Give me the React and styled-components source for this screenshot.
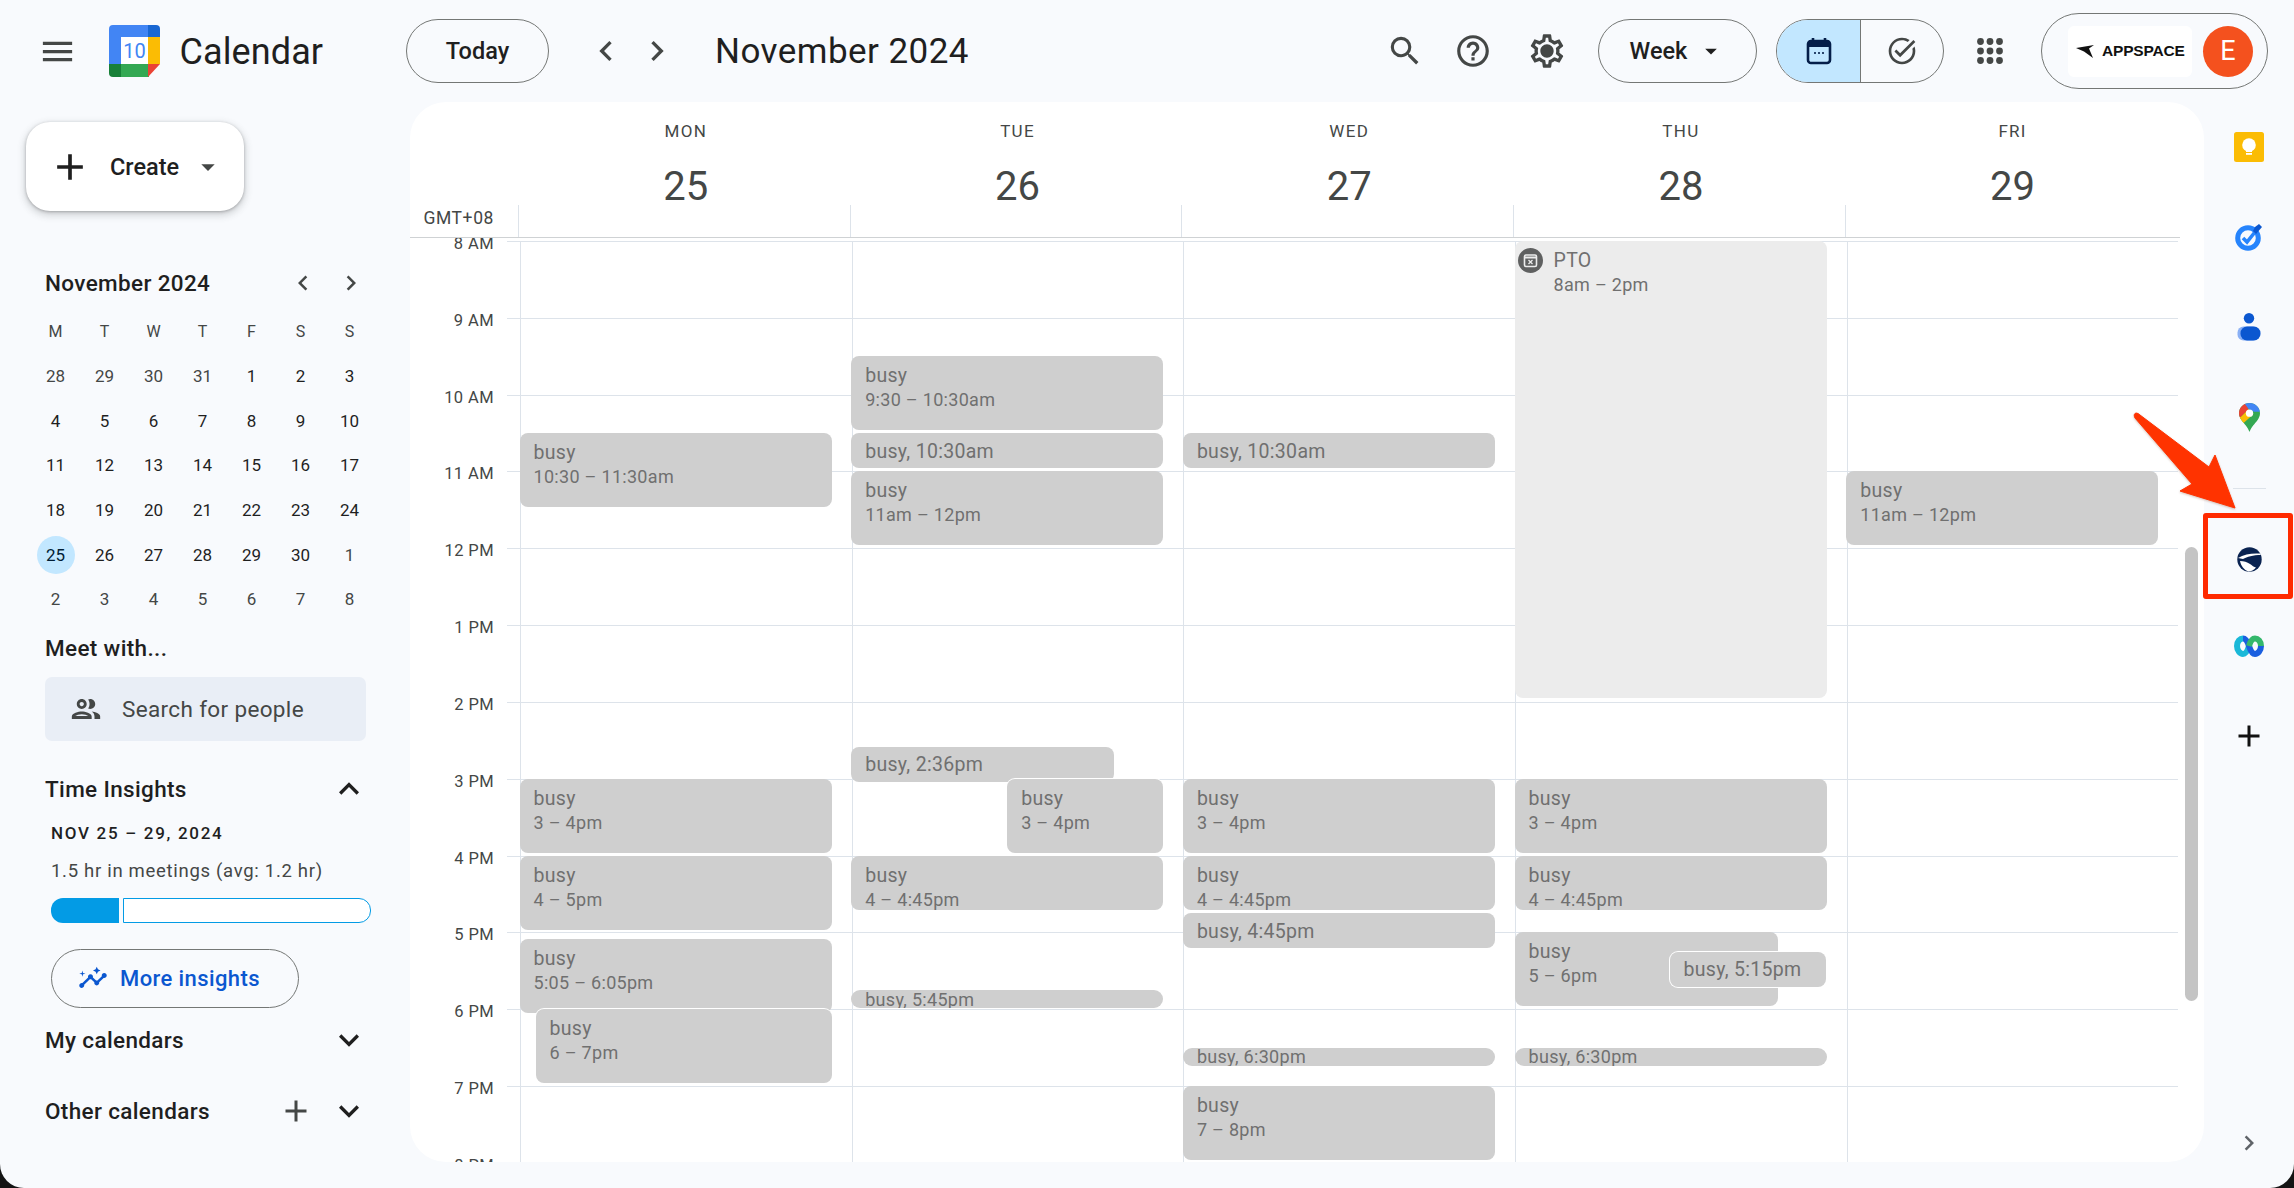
import React from "react";
import styled, { createGlobalStyle } from "styled-components";
import {
  MdMenu,
  MdSearch,
  MdOutlineHelpOutline,
  MdOutlineSettings,
  MdArrowDropDown,
  MdChevronLeft,
  MdChevronRight,
  MdAdd,
  MdKeyboardArrowUp,
  MdKeyboardArrowDown,
  MdOutlineGroup,
  MdOutlineTaskAlt,
  MdInsights,
} from "react-icons/md";

const FONT = `Roboto, "Liberation Sans", sans-serif`;
const HOUR = 76.83;

const GlobalStyle = createGlobalStyle`
  html, body {
    margin: 0;
    padding: 0;
    background: #141414;
    overflow: hidden;
  }
  * {
    box-sizing: border-box;
  }
`;

const Page = styled.div`
  position: relative;
  width: 2294px;
  height: 1188px;
  display: flex;
  flex-direction: column;
  overflow: hidden;
  background: #f8fafd;
  border-radius: 0 0 24px 24px;
  font-family: ${FONT};
  color: #1f1f1f;
`;

// Top bar
const TopBar = styled.header`
  flex: 0 0 102px;
  display: flex;
  align-items: center;
  padding-left: 37px;
`;

const IconSlot = styled.div`
  flex: none;
  display: flex;
  align-items: center;
  justify-content: center;
  width: ${(p) => p.$w || 40}px;
  height: 40px;
  margin-left: ${(p) => p.$ml || 0}px;
  color: ${(p) => p.$color || "#444746"};
`;

const Logo = styled.svg`
  flex: none;
  width: 51px;
  height: 52px;
  margin-left: 31.5px;
`;

const Brand = styled.div`
  flex: none;
  margin: 2px 0 0 20px;
  width: 226.5px;
  font-size: 36px;
  line-height: 40px;
  color: #1f1f1f;
  letter-spacing: 0.1px;
`;

const PillButton = styled.div`
  flex: none;
  display: flex;
  align-items: center;
  justify-content: center;
  gap: ${(p) => p.$gap || 0}px;
  width: ${(p) => p.$w}px;
  height: 64px;
  margin-left: ${(p) => p.$ml || 0}px;
  border: 1px solid #747775;
  border-radius: 32px;
  font-size: 23.5px;
  font-weight: 500;
  color: #1f1f1f;
`;

const MonthTitle = styled.div`
  flex: none;
  width: 300px;
  margin-left: 38px;
  font-size: 35px;
  color: #1f1f1f;
  letter-spacing: 0.45px;
`;

const GearSlot = styled(IconSlot)`
  position: relative;
  &::after {
    content: "";
    position: absolute;
    left: 14px;
    top: 14px;
    width: 12px;
    height: 12px;
    border-radius: 50%;
    background: #444746;
  }
`;

const ViewToggle = styled.div`
  flex: none;
  display: flex;
  width: 168px;
  height: 64px;
  margin-left: 19px;
  border: 1px solid #747775;
  border-radius: 32px;
  overflow: hidden;
`;

const ToggleCell = styled.div`
  display: flex;
  align-items: center;
  justify-content: center;
  flex: ${(p) => (p.$active ? "0 0 84px" : "1")};
  background: ${(p) => (p.$active ? "#c2e7ff" : "transparent")};
  border-right: ${(p) => (p.$active ? "1px solid #747775" : "none")};
  color: #444746;
`;

const AccountPill = styled.div`
  flex: none;
  display: flex;
  align-items: center;
  width: 227px;
  height: 76px;
  margin-left: 38px;
  padding-left: 26px;
  border: 1px solid #747775;
  border-radius: 38px;
`;

const OrgBadge = styled.div`
  display: flex;
  align-items: center;
  width: 124px;
  height: 51px;
  padding-left: 8px;
  background: #fff;
  border-radius: 6px;
  font-family: "Liberation Sans", sans-serif;
  font-size: 15.5px;
  font-weight: 700;
  color: #111;
  letter-spacing: -0.2px;
`;

const Avatar = styled.div`
  display: flex;
  align-items: center;
  justify-content: center;
  width: 50px;
  height: 51px;
  margin-left: 11px;
  border-radius: 50%;
  background: #f4511e;
  color: #fff;
  font-size: 27px;
`;

// Main area
const Main = styled.div`
  flex: 1;
  display: flex;
  min-height: 0;
`;

const Sidebar = styled.aside`
  flex: 0 0 410px;
`;

const CreateButton = styled.div`
  display: flex;
  align-items: center;
  width: 218px;
  height: 89px;
  margin: 20px 0 0 26px;
  padding-left: 22px;
  background: #fff;
  border-radius: 24px;
  box-shadow: 0 1px 3px rgba(60, 64, 67, 0.35), 0 3px 7px 2px rgba(60, 64, 67, 0.18);
  font-size: 23.5px;
  font-weight: 500;
`;

const CreateLabel = styled.span`
  margin-left: 18px;
  width: 82px;
`;

const SectionRow = styled.div`
  display: flex;
  align-items: center;
  justify-content: space-between;
  gap: 15px;
  width: 324px;
  height: 30px;
  margin-top: ${(p) => p.$mt || 0}px;
  margin-left: 45px;
  font-size: 22.5px;
  font-weight: 500;
  color: #1f1f1f;
  letter-spacing: 0.35px;
`;

const SectionTitle = styled.span`
  flex: 1;
`;

const MiniCalNav = styled.div`
  display: flex;
  align-items: center;
  gap: 18px;
  margin-right: 3px;
  color: #444746;
`;

const MiniCalGrid = styled.div`
  display: grid;
  grid-template-columns: repeat(7, 49px);
  grid-auto-rows: 44.7px;
  margin: 11px 0 0 31px;
`;

const MiniCalCell = styled.div`
  display: flex;
  align-items: center;
  justify-content: center;
  font-size: ${(p) => (p.$head ? 16 : 17)}px;
  color: ${(p) => (p.$head || p.$muted ? "#444746" : "#1f1f1f")};
`;

const TodayDot = styled.span`
  display: flex;
  align-items: center;
  justify-content: center;
  width: 38px;
  height: 38px;
  border-radius: 50%;
  background: #c2e7ff;
  color: #001d35;
`;

const PeopleSearch = styled.div`
  display: flex;
  align-items: center;
  width: 321px;
  height: 64px;
  margin: 14px 0 0 45px;
  padding-left: 24px;
  gap: 19px;
  background: #e9eef6;
  border-radius: 7px;
  font-size: 22.5px;
  color: #444746;
  letter-spacing: 0.35px;
`;

const InsightRange = styled.div`
  margin: 18px 0 0 51px;
  font-size: 17px;
  line-height: 22px;
  font-weight: 500;
  letter-spacing: 1.7px;
  color: #1f1f1f;
`;

const InsightText = styled.div`
  margin: 16px 0 0 51px;
  font-size: 18.5px;
  line-height: 22px;
  letter-spacing: 0.7px;
  color: #444746;
`;

const InsightBar = styled.div`
  display: flex;
  gap: 4px;
  width: 320px;
  height: 25px;
  margin: 16px 0 0 51px;
`;

const InsightFill = styled.div`
  flex: 0 0 68px;
  background: #039be5;
  border-radius: 12px 0 0 12px;
`;

const InsightTrack = styled.div`
  flex: 1;
  background: #fff;
  border: 1px solid #039be5;
  border-radius: 0 12px 12px 0;
`;

const InsightsButton = styled.div`
  display: flex;
  align-items: center;
  gap: 12px;
  width: 248px;
  height: 59px;
  margin: 26px 0 0 51px;
  padding-left: 26px;
  border: 1px solid #747775;
  border-radius: 30px;
  font-size: 22px;
  font-weight: 500;
  color: #0b57d0;
  letter-spacing: 0.4px;
`;

// Calendar panel
const Panel = styled.section`
  position: relative;
  flex: 0 0 1794px;
  display: flex;
  flex-direction: column;
  margin-bottom: 26px;
  background: #fff;
  border-radius: 36px;
  overflow: hidden;
`;

const WeekHeader = styled.div`
  flex: 0 0 136px;
  display: flex;
  width: 1770px;
  border-bottom: 1px solid #cfd2d4;
`;

const GmtCell = styled.div`
  flex: 0 0 108px;
  display: flex;
  align-items: flex-end;
  justify-content: flex-end;
  padding: 0 24px 10px 0;
  font-size: 17.5px;
  line-height: 18px;
  letter-spacing: 0.6px;
  color: #444746;
`;

const DayHead = styled.div`
  position: relative;
  flex: 0 0 331.7px;
  display: flex;
  flex-direction: column;
  align-items: center;
  padding: 19px 0 0 4px;
  &::before {
    content: "";
    position: absolute;
    left: 0;
    bottom: 0;
    height: 32px;
    width: 1px;
    background: #dde3ea;
  }
`;

const DayName = styled.div`
  font-size: 17px;
  line-height: 20px;
  letter-spacing: 1.3px;
  color: #444746;
`;

const DayNumber = styled.div`
  margin-top: 24px;
  font-size: 40px;
  line-height: 44px;
  color: #444746;
`;

const TimeGrid = styled.div`
  flex: 1;
  display: flex;
  min-height: 0;
  padding-top: 3px;
  overflow: hidden;
`;

const Gutter = styled.div`
  flex: 0 0 110px;
`;

const HourCell = styled.div`
  position: relative;
  height: ${HOUR}px;
  padding: 0 26px 0 0;
  text-align: right;
  font-size: 16.5px;
  line-height: 18px;
  letter-spacing: 0.4px;
  color: #444746;
  &::after {
    content: "";
    position: absolute;
    right: 0;
    top: 0;
    width: 13px;
    height: 1px;
    background: #dde3ea;
  }
`;

const HourLabel = styled.div`
  position: relative;
  top: -6px;
`;

const DayColumn = styled.div`
  position: relative;
  flex: 0 0 331.7px;
  border-left: 1px solid #dde3ea;
`;

const HourSlot = styled.div`
  height: ${HOUR}px;
  border-top: 1px solid #dde3ea;
`;

const Event = styled.div`
  position: absolute;
  display: flex;
  flex-direction: column;
  justify-content: ${(p) => (p.$compact ? "center" : "flex-start")};
  padding: ${(p) => (p.$tiny ? "0 14px" : p.$compact ? "2px 14px 0" : "8px 14px 0")};
  background: ${(p) => (p.$pale ? "#ececec" : "#cfcfcf")};
  border-radius: ${(p) => (p.$tiny ? 9 : 8)}px;
  box-shadow: ${(p) => (p.$outlined ? "0 0 0 1px #fff" : "none")};
  overflow: hidden;
  font-size: ${(p) => (p.$tiny ? 18 : p.$compact ? 19.5 : 18)}px;
  line-height: ${(p) => (p.$tiny ? 17 : 24)}px;
  letter-spacing: 0.3px;
  color: #707070;
  white-space: nowrap;
`;

const EventTitle = styled.div`
  font-size: 19.5px;
`;

const PtoHead = styled.div`
  display: flex;
  align-items: flex-start;
  gap: 11px;
`;

const PtoIcon = styled.svg`
  flex: none;
  width: 25px;
  height: 25px;
  margin: -1px 0 0 -11px;
`;

const Scrollbar = styled.div`
  position: absolute;
  left: 1775px;
  top: 445px;
  width: 13px;
  height: 454px;
  background: #c4c4c4;
  border-radius: 7px;
`;

// Right rail
const Rail = styled.aside`
  flex: 1;
  display: flex;
  flex-direction: column;
  align-items: center;
`;

const RailSlot = styled.div`
  flex: 0 0 ${(p) => p.$h || 90}px;
  display: flex;
  align-items: center;
  justify-content: center;
  margin-top: ${(p) => (p.$end ? "auto" : "0")};
`;

const RailDivider = styled.div`
  width: 33px;
  height: 1px;
  background: #dde3ea;
`;

const Callout = styled.div`
  position: absolute;
  left: 2203px;
  top: 513px;
  width: 90px;
  height: 86px;
  border: 5px solid #ff2a00;
  border-radius: 3px;
`;

const CalloutArrow = styled.svg`
  position: absolute;
  left: 2122px;
  top: 400px;
  width: 130px;
  height: 120px;
  filter: drop-shadow(0 1px 1px rgba(120, 40, 0, 0.3));
`;

const HOURS = ["8 AM", "9 AM", "10 AM", "11 AM", "12 PM", "1 PM", "2 PM", "3 PM", "4 PM", "5 PM", "6 PM", "7 PM", "8 PM"];

const MINI_HEAD = ["M", "T", "W", "T", "F", "S", "S"];
const MINI_DAYS = [
  28, 29, 30, 31, 1, 2, 3, 4, 5, 6, 7, 8, 9, 10, 11, 12, 13, 14, 15, 16, 17, 18, 19, 20, 21, 22, 23, 24, 25, 26, 27, 28,
  29, 30, 1, 2, 3, 4, 5, 6, 7, 8,
];

const two = (at, time, extra = {}) => ({ at, h: 74, title: "busy", time, ...extra });
const one = (at, text, extra = {}) => ({ at, h: 35, text, ...extra });
const tiny = (at, text) => ({ at, h: 18, text, tiny: true });

const DAYS = [
  {
    name: "MON",
    date: 25,
    events: [
      two(10.5, "10:30 – 11:30am"),
      two(15, "3 – 4pm"),
      two(16, "4 – 5pm"),
      two(17.08, "5:05 – 6:05pm"),
      two(18, "6 – 7pm", { x: 16, w: 296, outlined: true }),
    ],
  },
  {
    name: "TUE",
    date: 26,
    events: [
      two(9.5, "9:30 – 10:30am"),
      one(10.5, "busy, 10:30am"),
      two(11, "11am – 12pm"),
      one(14.58, "busy, 2:36pm", { w: 263 }),
      two(15, "3 – 4pm", { x: 156, w: 156, outlined: true }),
      two(16, "4 – 4:45pm", { h: 54 }),
      tiny(17.75, "busy, 5:45pm"),
    ],
  },
  {
    name: "WED",
    date: 27,
    events: [
      one(10.5, "busy, 10:30am"),
      two(15, "3 – 4pm"),
      two(16, "4 – 4:45pm", { h: 54 }),
      one(16.75, "busy, 4:45pm"),
      tiny(18.5, "busy, 6:30pm"),
      two(19, "7 – 8pm"),
    ],
  },
  {
    name: "THU",
    date: 28,
    events: [
      { at: 8, h: 457, title: "PTO", time: "8am – 2pm", pale: true },
      two(15, "3 – 4pm"),
      two(16, "4 – 4:45pm", { h: 54 }),
      two(17, "5 – 6pm", { w: 263 }),
      one(17.25, "busy, 5:15pm", { x: 155, w: 156, outlined: true }),
      tiny(18.5, "busy, 6:30pm"),
    ],
  },
  { name: "FRI", date: 29, events: [two(11, "11am – 12pm")] },
];

const CalendarLogo = () => (
  <Logo viewBox="0 0 51 52">
    <path d="M4 0h36v12H12v28H0V4a4 4 0 0 1 4-4z" fill="#4285f4" />
    <path d="M39 0h8a4 4 0 0 1 4 4v8H39z" fill="#1967d2" />
    <rect x="39" y="12" width="12" height="27" fill="#fbbc04" />
    <rect x="12" y="39" width="28" height="13" fill="#34a853" />
    <path d="M0 39h12v13H4a4 4 0 0 1-4-4z" fill="#188038" />
    <path d="M39 39h12L39 52z" fill="#ea4335" />
    <rect x="12" y="12" width="27" height="27" fill="#fff" />
    <text x="25.5" y="33" textAnchor="middle" fontFamily="Roboto, sans-serif" fontSize="20" fill="#4285f4">
      10
    </text>
  </Logo>
);

const CalendarGlyph = () => (
  <svg width="26" height="28" viewBox="0 0 26 28">
    <path d="M7 1v4M19 1v4" stroke="#041e49" strokeWidth="2.6" />
    <rect x="2" y="4" width="22" height="22" rx="3" fill="none" stroke="#041e49" strokeWidth="2.6" />
    <rect x="2" y="4" width="22" height="6" fill="#041e49" />
    <circle cx="9" cy="16" r="1.1" fill="#041e49" />
    <circle cx="13" cy="16" r="1.1" fill="#041e49" />
    <circle cx="17" cy="16" r="1.1" fill="#041e49" />
  </svg>
);

const AppsGrid = () => (
  <svg width="26" height="26" viewBox="0 0 26 26" fill="#444746">
    {[3.5, 13, 22.5].map((cy) =>
      [3.5, 13, 22.5].map((cx) => <circle key={`${cx}-${cy}`} cx={cx} cy={cy} r="3.4" />)
    )}
  </svg>
);

const AppspaceMark = () => (
  <svg width="26" height="13" viewBox="0 0 26 13" style={{ flex: "none" }}>
    <path d="M0 3L18 0l-5 3.500L17 13 8 6.500z" fill="#111" />
  </svg>
);

const KeepIcon = () => (
  <svg width="30" height="30" viewBox="0 0 30 30">
    <rect width="30" height="30" rx="2.5" fill="#fbbc04" />
    <circle cx="15" cy="13" r="6.8" fill="#fff" />
    <rect x="12" y="16" width="6" height="4" fill="#fff" />
    <rect x="12" y="21" width="6" height="1.8" fill="#fff" />
  </svg>
);

const TasksIcon = () => (
  <svg width="28" height="28" viewBox="0 0 28 28">
    <circle cx="13" cy="15" r="10.3" fill="none" stroke="#2684fc" strokeWidth="5" />
    <path d="M8 15l4 4 8-10" fill="none" stroke="#2684fc" strokeWidth="3.6" />
    <path d="M20 4l4-3 3 3-6 7-3-3z" fill="#0b57d0" />
  </svg>
);

const ContactsIcon = () => (
  <svg width="24" height="28" viewBox="0 0 24 28">
    <circle cx="12" cy="5.2" r="5.2" fill="#0b57d0" />
    <rect x="0.5" y="13.5" width="21" height="14" rx="6" fill="#8ab0f5" />
    <rect x="3.5" y="13.5" width="20" height="14" rx="6.5" fill="#0b57d0" />
  </svg>
);

const MapsIcon = () => (
  <svg width="21" height="29" viewBox="0 0 24 33">
    <clipPath id="pin">
      <path d="M12 0C5.4 0 0 5.2 0 11.7c0 3 1.2 5.4 2.7 7.6C6 24 10 27 12 33c2-6 6-9 9.3-13.7 1.5-2.2 2.7-4.6 2.7-7.6C24 5.2 18.6 0 12 0z" />
    </clipPath>
    <g clipPath="url(#pin)">
      <rect width="24" height="33" fill="#34a853" />
      <path d="M5 0h19v10H17L10 6z" fill="#4285f4" />
      <path d="M0 0h6l5 7-9 9H0z" fill="#ea4335" />
      <path d="M0 16l2 0 9-9 5 6-12 11z" fill="#fbbc04" />
    </g>
    <circle cx="12" cy="11.5" r="4.2" fill="#fff" />
  </svg>
);

const GlobeIcon = () => (
  <svg width="25" height="25" viewBox="0 0 25 25">
    <circle cx="12.5" cy="12.5" r="12.2" fill="#0a2351" />
    <path d="M1 11C7 7 15 6 23 6.500L24 8C16 8 10 10 6 12z" fill="#fff" />
    <path d="M3 14c4 0 7 1 10 3 2 1.500 4 3 6 3.500-2 2.500-5 4-7.500 4C7 23 4 19 3 14z" fill="#fff" />
  </svg>
);

const WebexIcon = () => (
  <svg width="30" height="22" viewBox="0 0 30 22">
    <path d="M9 3.500c-3 0-6 3-6 7.500s3 8 6 8 4.500-3 6-8" fill="none" stroke="#1ab8d8" strokeWidth="6" />
    <path d="M9 3.500c3 0 4.500 3 6 7.500s3 8 6 8 6-3.500 6-8" fill="none" stroke="#1a5fe0" strokeWidth="6" />
    <path d="M15 11c1.500-5 3-7.500 6-7.500s6 3 6 7.500" fill="none" stroke="#34b86c" strokeWidth="6" />
  </svg>
);

const CalendarEvent = ({ event }) => {
  const { at, h, x = 0, w = 312, title, time, text, tiny: isTiny, outlined, pale } = event;
  const top = (at - 8) * HOUR;
  return (
    <Event
      $compact={Boolean(text)}
      $tiny={isTiny}
      $outlined={outlined}
      $pale={pale}
      style={{ top, left: x - 1.5, width: w, height: h }}
    >
      {text ? (
        text
      ) : pale ? (
        <PtoHead>
          <PtoIcon viewBox="0 0 25 25">
            <circle cx="12.5" cy="12.5" r="12.5" fill="#5f6060" />
            <rect x="6.5" y="7" width="12" height="11.5" rx="1.5" fill="none" stroke="#ececec" strokeWidth="1.6" />
            <path d="M6.5 9.5h12" stroke="#ececec" strokeWidth="2" />
            <path d="M10.5 12l4 4M14.5 12l-4 4" stroke="#ececec" strokeWidth="1.3" />
          </PtoIcon>
          <div>
            <EventTitle>{title}</EventTitle>
            <div>{time}</div>
          </div>
        </PtoHead>
      ) : (
        <>
          <EventTitle>{title}</EventTitle>
          <div>{time}</div>
        </>
      )}
    </Event>
  );
};

export default function App() {
  return (
    <Page>
      <GlobalStyle />
      <TopBar>
        <IconSlot>
          <MdMenu size={39} />
        </IconSlot>
        <CalendarLogo />
        <Brand>Calendar</Brand>
        <PillButton $w={143}>Today</PillButton>
        <IconSlot $ml={37}>
          <MdChevronLeft size={40} />
        </IconSlot>
        <IconSlot $ml={11}>
          <MdChevronRight size={40} />
        </IconSlot>
        <MonthTitle>November 2024</MonthTitle>
        <IconSlot $ml={370}>
          <MdSearch size={38} />
        </IconSlot>
        <IconSlot $ml={28}>
          <MdOutlineHelpOutline size={38} />
        </IconSlot>
        <GearSlot $ml={34}>
          <MdOutlineSettings size={40} />
        </GearSlot>
        <PillButton $w={159} $ml={31} $gap={10}>
          Week
          <MdArrowDropDown size={28} color="#1f1f1f" />
        </PillButton>
        <ViewToggle>
          <ToggleCell $active>
            <CalendarGlyph />
          </ToggleCell>
          <ToggleCell>
            <MdOutlineTaskAlt size={32} />
          </ToggleCell>
        </ViewToggle>
        <IconSlot $ml={33} $w={26}>
          <AppsGrid />
        </IconSlot>
        <AccountPill>
          <OrgBadge>
            <AppspaceMark />
            APPSPACE
          </OrgBadge>
          <Avatar>E</Avatar>
        </AccountPill>
      </TopBar>

      <Main>
        <Sidebar>
          <CreateButton>
            <MdAdd size={44} />
            <CreateLabel>Create</CreateLabel>
            <MdArrowDropDown size={32} color="#444746" />
          </CreateButton>

          <SectionRow $mt={57}>
            <SectionTitle>November 2024</SectionTitle>
            <MiniCalNav>
              <MdChevronLeft size={30} />
              <MdChevronRight size={30} />
            </MiniCalNav>
          </SectionRow>
          <MiniCalGrid>
            {MINI_HEAD.map((d, i) => (
              <MiniCalCell key={i} $head>
                {d}
              </MiniCalCell>
            ))}
            {MINI_DAYS.map((d, i) => (
              <MiniCalCell key={i} $muted={i < 4 || i > 33}>
                {i === 28 ? <TodayDot>{d}</TodayDot> : d}
              </MiniCalCell>
            ))}
          </MiniCalGrid>

          <SectionRow $mt={11}>
            <SectionTitle>Meet with...</SectionTitle>
          </SectionRow>
          <PeopleSearch>
            <MdOutlineGroup size={34} />
            Search for people
          </PeopleSearch>

          <SectionRow $mt={33}>
            <SectionTitle>Time Insights</SectionTitle>
            <MdKeyboardArrowUp size={40} />
          </SectionRow>
          <InsightRange>NOV 25 – 29, 2024</InsightRange>
          <InsightText>1.5 hr in meetings (avg: 1.2 hr)</InsightText>
          <InsightBar>
            <InsightFill />
            <InsightTrack />
          </InsightBar>
          <InsightsButton>
            <MdInsights size={30} />
            More insights
          </InsightsButton>

          <SectionRow $mt={17}>
            <SectionTitle>My calendars</SectionTitle>
            <MdKeyboardArrowDown size={40} />
          </SectionRow>
          <SectionRow $mt={41}>
            <SectionTitle>Other calendars</SectionTitle>
            <MdAdd size={36} color="#444746" />
            <MdKeyboardArrowDown size={40} />
          </SectionRow>
        </Sidebar>

        <Panel>
          <WeekHeader>
            <GmtCell>GMT+08</GmtCell>
            {DAYS.map((day) => (
              <DayHead key={day.name}>
                <DayName>{day.name}</DayName>
                <DayNumber>{day.date}</DayNumber>
              </DayHead>
            ))}
          </WeekHeader>
          <TimeGrid>
            <Gutter>
              {HOURS.map((hour) => (
                <HourCell key={hour}>
                  <HourLabel>{hour}</HourLabel>
                </HourCell>
              ))}
            </Gutter>
            {DAYS.map((day) => (
              <DayColumn key={day.name}>
                {HOURS.map((hour) => (
                  <HourSlot key={hour} />
                ))}
                {day.events.map((event, i) => (
                  <CalendarEvent key={i} event={event} />
                ))}
              </DayColumn>
            ))}
          </TimeGrid>
          <Scrollbar />
        </Panel>

        <Rail>
          <RailSlot>
            <KeepIcon />
          </RailSlot>
          <RailSlot>
            <TasksIcon />
          </RailSlot>
          <RailSlot>
            <ContactsIcon />
          </RailSlot>
          <RailSlot>
            <MapsIcon />
          </RailSlot>
          <RailSlot $h={52}>
            <RailDivider />
          </RailSlot>
          <RailSlot>
            <GlobeIcon />
          </RailSlot>
          <RailSlot $h={84}>
            <WebexIcon />
          </RailSlot>
          <RailSlot $h={96}>
            <MdAdd size={36} color="#111" />
          </RailSlot>
          <RailSlot $end>
            <MdChevronRight size={30} color="#5f6368" />
          </RailSlot>
        </Rail>
      </Main>

      <Callout />
      <CalloutArrow viewBox="0 0 130 120">
        <path
          d="M14 13Q16 13 18 15L87 67 93 55 113 108 58 91 70 84 13 18Q11 14 14 13z"
          fill="#ff3300"
          stroke="#ff3300"
          strokeLinejoin="round"
        />
      </CalloutArrow>
    </Page>
  );
}
